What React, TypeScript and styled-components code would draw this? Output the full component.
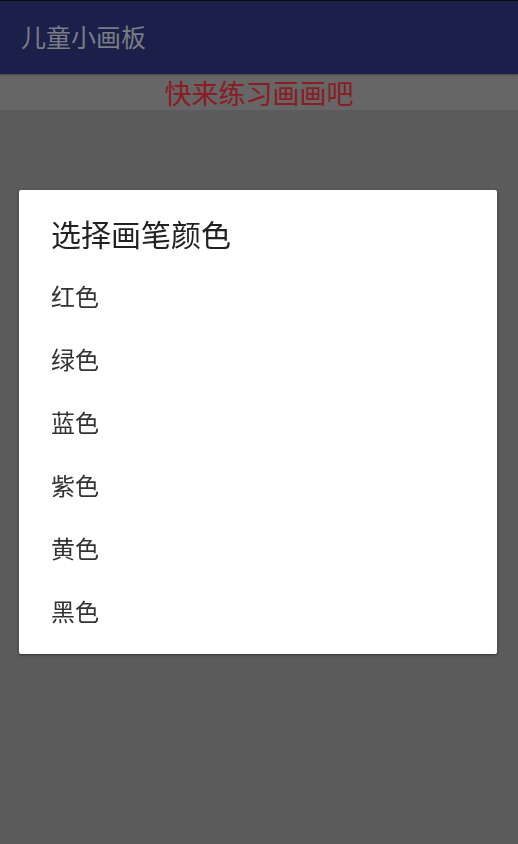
import styled, { createGlobalStyle } from 'styled-components'

const GlobalStyle = createGlobalStyle`
    html, body {
        margin: 0;
        padding: 0;
        height: 100%;
        background-color: #5b5b5b;
    }
    body {
        font-family: 'Noto Sans CJK SC', 'Noto Sans', sans-serif;
    }
    #root {
        height: 100%;
    }
`

const Screen = styled.div`
    height: 844px;
    display: flex;
    flex-direction: column;
    background-color: #5b5b5b;
    border-top: 1px solid #0a0a14;
`

const AppBar = styled.header`
    height: 73px;
    flex-shrink: 0;
    display: flex;
    align-items: center;
    padding: 0 21px;
    background-color: #1a2049;
    box-shadow: 0 1px 2px rgba(0, 0, 0, 0.35);
    position: relative;
    z-index: 1;
`

const AppTitle = styled.h1`
    margin: 0;
    font-size: 25px;
    font-weight: 400;
    line-height: 1;
    color: #7b7d85;
    transform: translateY(-1px);
`

const Hint = styled.div`
    height: 36px;
    flex-shrink: 0;
    display: flex;
    align-items: center;
    justify-content: center;
    background-color: #666666;
    color: #8a1c24;
    font-size: 27px;
    line-height: 1;
`

const Canvas = styled.main`
    flex: 1;
    background-color: #5b5b5b;
`

const Overlay = styled.div`
    position: fixed;
    inset: 0;
    display: flex;
    align-items: center;
    justify-content: center;
    z-index: 10;
`

const Dialog = styled.section`
    width: 478px;
    box-sizing: border-box;
    padding: 22px 0 12px;
    background-color: #ffffff;
    border-radius: 2px;
    box-shadow: 0 1px 3px rgba(0, 0, 0, 0.4);
    transform: translateX(-1px);
`

const DialogTitle = styled.h2`
    margin: 0 0 10px;
    padding: 0 32px;
    height: 42px;
    display: flex;
    align-items: center;
    font-size: 30px;
    font-weight: 400;
    line-height: 1;
    color: #222222;
`

const ColorList = styled.ul`
    list-style: none;
    margin: 0;
    padding: 0;
`

const ColorItem = styled.li`
    height: 63px;
    display: flex;
    align-items: center;
    padding: 0 32px;
    font-size: 24px;
    line-height: 1;
    color: #333333;
`

const colors = ['红色', '绿色', '蓝色', '紫色', '黄色', '黑色']

function App() {
    return (
        <>
            <GlobalStyle />
            <Screen>
                <AppBar>
                    <AppTitle>儿童小画板</AppTitle>
                </AppBar>
                <Hint>快来练习画画吧</Hint>
                <Canvas />
            </Screen>
            <Overlay>
                <Dialog>
                    <DialogTitle>选择画笔颜色</DialogTitle>
                    <ColorList>
                        {colors.map((c) => (
                            <ColorItem key={c}>{c}</ColorItem>
                        ))}
                    </ColorList>
                </Dialog>
            </Overlay>
        </>
    )
}

export default App
